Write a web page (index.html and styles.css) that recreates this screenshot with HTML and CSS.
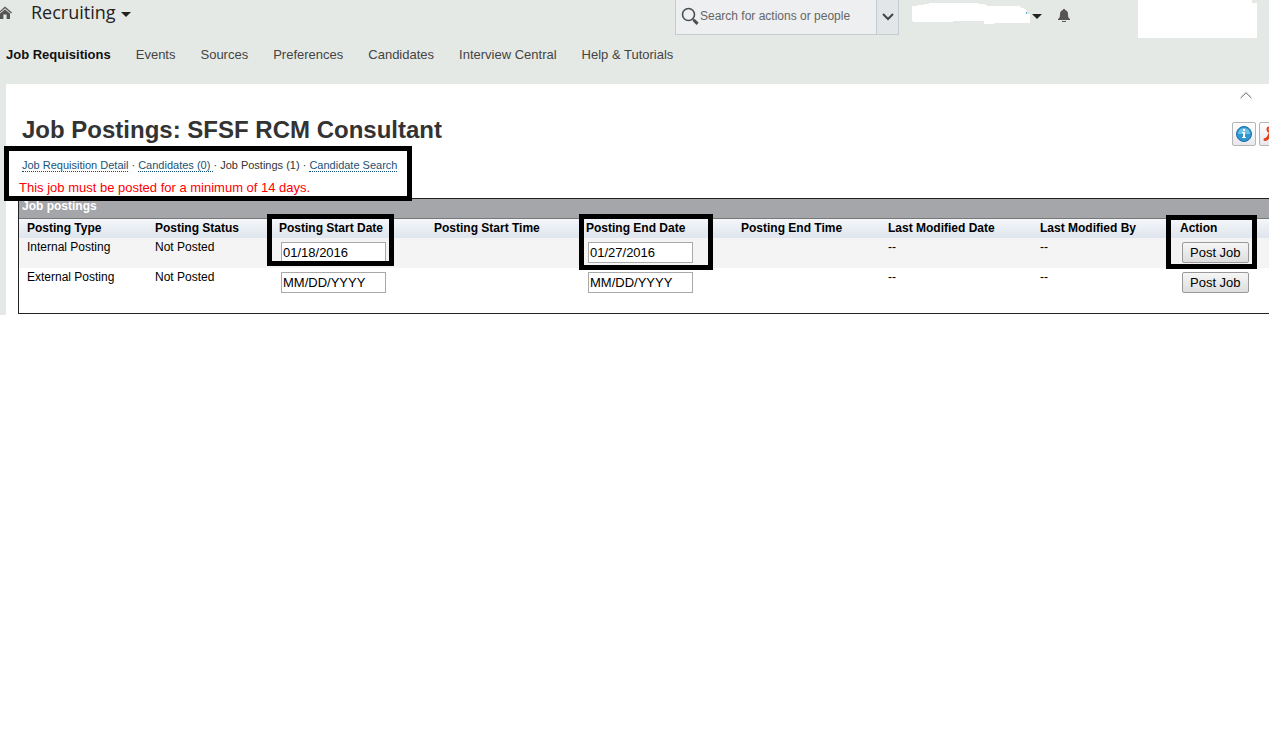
FILE: index.html
```
<!DOCTYPE html>
<html lang="en">
<head>
<meta charset="UTF-8" />
<meta name="viewport" content="width=device-width, initial-scale=1" />
<title>Job Postings: SFSF RCM Consultant</title>
<link rel="stylesheet" href="styles.css">
</head>
<body>

<div class="shell">
  <header class="topbar">
    <a class="home" href="#" aria-label="Home">
      <svg width="14" height="13" viewBox="0 0 14 13"><path d="M0 6.600 7 .6l7 6-.8.9L7 2.200.8 7.500z" fill="#555"/><path d="M2 7.600 7 3.400l5 4.200V13H8.600V8.500H5.400V13H2z" fill="#555"/></svg>
    </a>
    <button class="module" type="button">Recruiting <span class="caret"></span></button>

    <form class="search">
      <svg class="search-icon" width="18" height="19" viewBox="0 0 18 19" fill="none" stroke="#4c4f52"><circle cx="7.500" cy="7.500" r="6" stroke-width="1.600"/><path d="M12 12.200l1.500 1.500" stroke-width="2"/><path d="M13 13.300l3.600 3.600" stroke-width="3"/></svg>
      <input class="search-input" type="text" placeholder="Search for actions or people" aria-label="Search for actions or people">
      <button class="search-toggle" type="button" aria-label="Search options">
        <svg width="12" height="8" viewBox="0 0 12 8" fill="none" stroke="#444" stroke-width="2"><path d="M1 1l5 5 5-5"/></svg>
      </button>
    </form>

    <button class="account" type="button" aria-label="Account">
      <svg width="118" height="24" viewBox="0 0 118 24" shape-rendering="crispEdges"><path d="M0 6h5V5h7V4h5V3h49v1h7v1h2v1h33v1h1v1h3v1h2v2h1v3h3v9H82v1H72v-3H41v1H1v-1H0z" fill="#fff"/><path d="M114 12h1v2h-1z" fill="#58b4d8"/></svg>
      <span class="caret"></span>
    </button>
    <button class="alerts" type="button" aria-label="Notifications">
      <svg width="12" height="13" viewBox="0 0 12 13" fill="#555"><path d="M5 0h2v1c2 .5 3 2 3 4 0 3 .5 4 2 5v1H0v-1c1.500-1 2-2 2-5 0-2 1-3.500 3-4zM4 12h4v1H4z"/></svg>
    </button>
    <div class="logo">
      <svg width="119" height="38" viewBox="0 0 119 38"><path d="M0 0h114v3h5v35H0z" fill="#fff"/></svg>
    </div>
  </header>

  <nav class="tabs">
    <a class="tab active" href="#">Job Requisitions</a>
    <a class="tab" href="#">Events</a>
    <a class="tab" href="#">Sources</a>
    <a class="tab" href="#">Preferences</a>
    <a class="tab" href="#">Candidates</a>
    <a class="tab" href="#">Interview Central</a>
    <a class="tab" href="#">Help &amp; Tutorials</a>
  </nav>

  <main class="content">
    <div class="page-head">
      <h1>Job Postings: SFSF RCM Consultant</h1>
      <div class="tools">
        <button class="collapse" type="button" aria-label="Collapse header">
          <svg width="12" height="8" viewBox="0 0 12 8" fill="none"><path d="M.5 6 6 .8 11.500 6" stroke="#c5cbce"/><path d="M.5 7.300 6 2.100l5.500 5.200" stroke="#858c90"/></svg>
        </button>
        <div class="toolbar">
          <button class="tool" type="button" aria-label="Information">
            <svg width="16" height="16" viewBox="0 0 16 16"><circle cx="8" cy="8" r="7.500" fill="#2f96d0" stroke="#1a6fae"/><path d="M2 8a6 6 0 0 1 12 0z" fill="#6fc0e6"/><path d="M7 3h2v2H7zM6 6h3v5h1v1H6v-1h1V7H6z" fill="#fff"/></svg>
          </button>
          <button class="tool" type="button" aria-label="Export PDF">
            <svg width="16" height="16" viewBox="0 0 16 16" fill="none" stroke="#e2401c" stroke-linecap="round"><path d="M2 13.500c2 0 4-3 5-6" stroke-width="3"/><path d="M7 3c0 4 3 7 7 8M4 12c3-2 6-3 10-2" stroke-width="2"/><circle cx="6.500" cy="3.500" r="2" stroke-width="2"/></svg>
          </button>
        </div>
      </div>
    </div>

    <div class="intro">
      <div class="crumbs">
        <a href="#">Job Requisition Detail</a> · <a href="#">Candidates (0)&nbsp;</a>· <span>Job Postings (1)</span> · <a href="#">Candidate Search</a>
      </div>
      <p class="warning">This job must be posted for a minimum of 14 days.</p>
      <span class="mark mark-intro"></span>
    </div>

    <section class="panel">
      <h2>Job postings</h2>
      <table class="postings">
        <colgroup>
          <col class="c-type"><col class="c-status"><col class="c-date"><col class="c-time">
          <col class="c-date"><col class="c-endtime"><col class="c-time"><col class="c-by"><col>
        </colgroup>
        <thead>
          <tr>
            <th>Posting Type</th>
            <th>Posting Status</th>
            <th class="marked">Posting Start Date<span class="mark mark-start"></span></th>
            <th>Posting Start Time</th>
            <th class="marked">Posting End Date<span class="mark mark-end"></span></th>
            <th>Posting End Time</th>
            <th>Last Modified Date</th>
            <th>Last Modified By</th>
            <th class="marked">Action<span class="mark mark-action"></span></th>
          </tr>
        </thead>
        <tbody>
          <tr>
            <td>Internal Posting</td>
            <td>Not Posted</td>
            <td class="field"><input type="text" value="01/18/2016" aria-label="Internal posting start date"></td>
            <td></td>
            <td class="field"><input type="text" value="01/27/2016" aria-label="Internal posting end date"></td>
            <td></td>
            <td>--</td>
            <td>--</td>
            <td class="field"><button type="button">Post Job</button></td>
          </tr>
          <tr>
            <td>External Posting</td>
            <td>Not Posted</td>
            <td class="field"><input type="text" value="MM/DD/YYYY" aria-label="External posting start date"></td>
            <td></td>
            <td class="field"><input type="text" value="MM/DD/YYYY" aria-label="External posting end date"></td>
            <td></td>
            <td>--</td>
            <td>--</td>
            <td class="field"><button type="button">Post Job</button></td>
          </tr>
        </tbody>
      </table>
    </section>
  </main>
</div>

</body>
</html>
```
FILE: styles.css
```
* {
  box-sizing: border-box;
}

body {
  margin: 0;
  background: #fff;
  color: #000;
  font-family: Arial, "Liberation Sans", sans-serif;
  font-size: 12px;
  overflow-x: hidden;
}

svg {
  display: block;
}

button,
input {
  font-family: inherit;
}

.shell {
  background: #e5e9e5;
  padding-left: 6px;
}

/* top bar */
.topbar {
  display: flex;
  align-items: flex-start;
  padding-right: 12px;
}

.home {
  margin: 6px 0 0 -8px;
}

.module,
.account,
.alerts,
.collapse {
  display: flex;
  align-items: center;
  border: none;
  background: none;
  padding: 0;
}

.module {
  gap: 5px;
  margin-left: 19px;
  font-family: "Open Sans", sans-serif;
  font-size: 18px;
  line-height: 24px;
  color: #222;
}

.caret {
  border: 5px solid transparent;
  border-top-color: #222;
  border-bottom: none;
}

.module .caret {
  margin-top: 4px;
}

.search {
  display: flex;
  align-items: center;
  width: 224px;
  height: 35px;
  margin-left: auto;
  border: 1px solid #c5cdd3;
  border-top: none;
  background: #eeeff1;
}

.search-icon {
  margin: 0 0 2px 5px;
}

.search-input {
  flex: 1;
  min-width: 0;
  height: 32px;
  border: none;
  background: none;
  padding: 0 1px 2px;
  font-size: 12px;
}

.search-input::placeholder {
  color: #666;
}

.search-toggle {
  display: flex;
  align-items: center;
  justify-content: center;
  align-self: stretch;
  width: 22px;
  border: none;
  border-left: 1px solid #c5cdd3;
  background: #e2e6e9;
  padding: 0;
}

.account {
  gap: 2px;
  margin: 0 0 0 13px;
}

.account .caret {
  margin-top: 8px;
}

.alerts {
  margin: 9px 0 0 16px;
}

.logo {
  margin-left: 68px;
}

/* tabs */
.tabs {
  display: flex;
  gap: 25px;
  padding: 9px 0 21px;
  font-size: 13px;
  line-height: 16px;
}

.tab {
  color: #444;
  text-decoration: none;
}

.tab.active {
  color: #111;
  font-weight: bold;
}

/* page */
.content {
  background: #fff;
  padding: 7px 0 1px 12px;
}

.page-head {
  display: flex;
  align-items: flex-end;
  justify-content: space-between;
  padding-left: 4px;
}

h1 {
  margin: 0;
  font-size: 24px;
  line-height: 32px;
  color: #333;
}

.tools {
  width: 37px;
}

.collapse {
  margin: 0 0 23px 8px;
}

.toolbar {
  display: flex;
  gap: 3px;
}

.tool {
  display: flex;
  flex: none;
  align-items: center;
  justify-content: center;
  width: 24px;
  height: 24px;
  border: 1px solid #b5b5b5;
  border-radius: 2px;
  background: linear-gradient(#fff, #e8e8ec);
  padding: 0;
}

.intro {
  position: relative;
  width: fit-content;
  padding: 11px 0 2px 1px;
}

.crumbs {
  padding-left: 3px;
  font-size: 11px;
  line-height: 16px;
  color: #333;
}

.crumbs a {
  border-bottom: 1px dotted #0a5078;
  color: #1a5276;
  text-decoration: none;
}

.warning {
  margin: 7px 0 0;
  font-size: 13px;
  line-height: 16px;
  color: #f00;
}

/* postings table */
.panel {
  border: 1px solid #222;
  border-right: none;
  padding-bottom: 15px;
}

h2 {
  margin: 0;
  padding: 0 3px 4px;
  border-bottom: 1px solid #777;
  background: #a5a6aa;
  color: #fff;
  font-size: 12px;
  line-height: 15px;
}

.postings {
  width: 100%;
  table-layout: fixed;
  border-collapse: collapse;
}

.c-type { width: 128px; }
.c-status { width: 124px; }
.c-date { width: 155px; }
.c-time { width: 152px; }
.c-endtime { width: 147px; }
.c-by { width: 140px; }

.postings th {
  height: 19px;
  padding: 0 0 1px 8px;
  text-align: left;
  line-height: 16px;
  white-space: nowrap;
}

.postings thead tr {
  background: linear-gradient(#f4f6f9, #dfe5ee);
}

.postings td {
  height: 30px;
  padding: 1px 0 0 8px;
  line-height: 16px;
  vertical-align: top;
}

.postings tbody tr:nth-child(odd) {
  background: #f4f4f4;
}

.postings .field {
  padding: 4px 0 0 10px;
}

.field input {
  display: block;
  width: 105px;
  height: 21px;
  border: 1px solid #a9a9a9;
  padding: 0 1px;
  font-size: 13px;
}

.field button {
  display: block;
  height: 21px;
  border: 1px solid #999;
  border-radius: 2px;
  background: linear-gradient(#f6f6f6, #ddd);
  padding: 0 7px;
  font-size: 13px;
}

/* highlight frames */
.marked {
  position: relative;
}

.mark {
  position: absolute;
  z-index: 1;
  border: 5px solid #000;
  pointer-events: none;
}

.mark-intro {
  top: 0;
  left: -14px;
  right: -15px;
  height: 55px;
}

.mark-start {
  top: -5px;
  left: -4px;
  width: 127px;
  height: 52px;
}

.mark-end {
  top: -5px;
  left: 1px;
  width: 134px;
  height: 56px;
}

.mark-action {
  top: -4px;
  left: -6px;
  width: 91px;
  height: 54px;
}
```
